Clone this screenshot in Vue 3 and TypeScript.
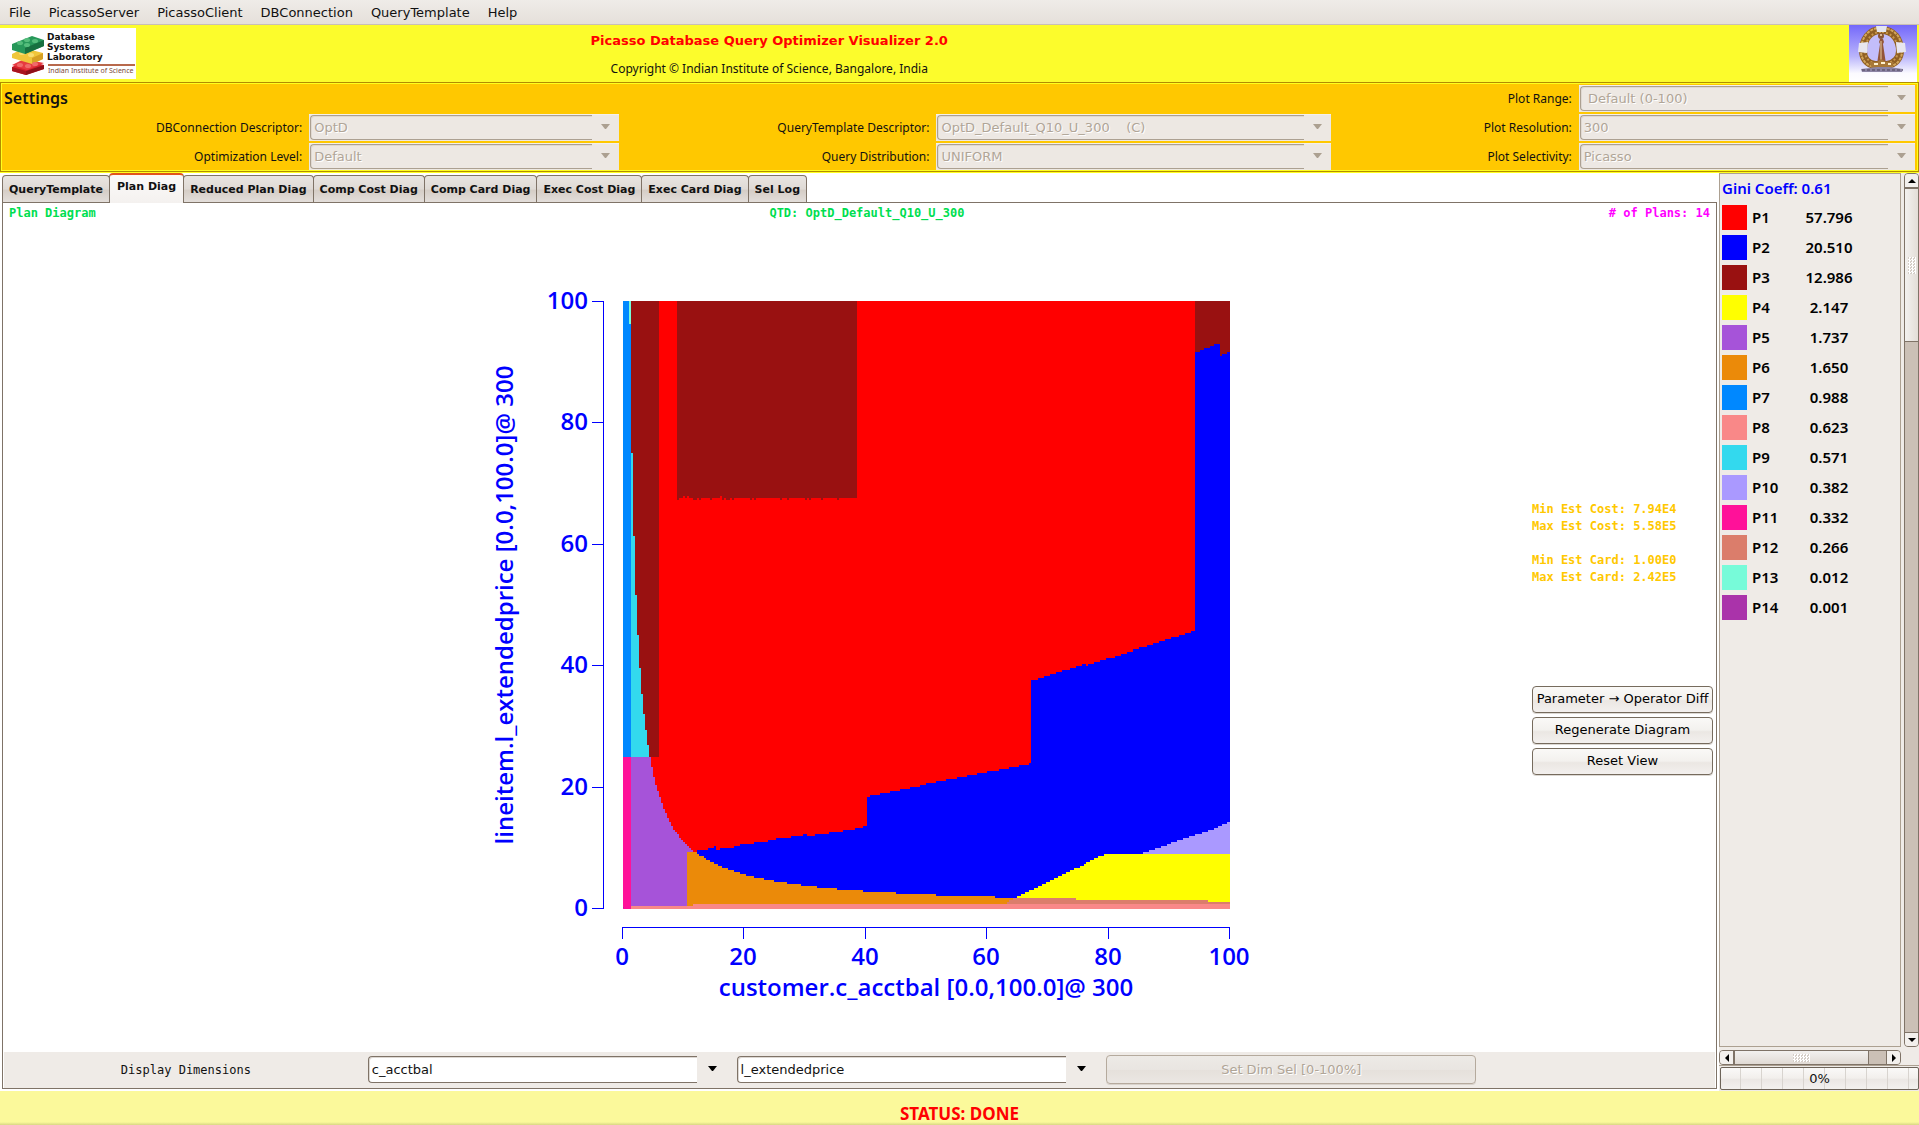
<script setup lang="ts">
import { ref } from 'vue'

interface Plan {
  name: string
  share: string
  color: string
}

interface Step {
  x: number
  y: number
}

const menus = ['File', 'PicassoServer', 'PicassoClient', 'DBConnection', 'QueryTemplate', 'Help']

const tabs = [
  'QueryTemplate',
  'Plan Diag',
  'Reduced Plan Diag',
  'Comp Cost Diag',
  'Comp Card Diag',
  'Exec Cost Diag',
  'Exec Card Diag',
  'Sel Log',
]
const activeTab = ref('Plan Diag')

const settings = [
  { id: 'range', label: 'Plot Range:', value: '\u00a0Default (0-100)', area: 'range' },
  { id: 'conn', label: 'DBConnection Descriptor:', value: 'OptD', area: 'conn' },
  { id: 'qtd', label: 'QueryTemplate Descriptor:', value: 'OptD_Default_Q10_U_300\u00a0\u00a0\u00a0\u00a0(C)', area: 'qtd' },
  { id: 'res', label: 'Plot Resolution:', value: '300', area: 'res' },
  { id: 'opt', label: 'Optimization Level:', value: 'Default', area: 'opt' },
  { id: 'dist', label: 'Query Distribution:', value: 'UNIFORM', area: 'dist' },
  { id: 'sel', label: 'Plot Selectivity:', value: 'Picasso', area: 'sel' },
]

const plans: Plan[] = [
  { name: 'P1', share: '57.796', color: '#ff0000' },
  { name: 'P2', share: '20.510', color: '#0000ff' },
  { name: 'P3', share: '12.986', color: '#991111' },
  { name: 'P4', share: '2.147', color: '#ffff00' },
  { name: 'P5', share: '1.737', color: '#a653d9' },
  { name: 'P6', share: '1.650', color: '#eb8a09' },
  { name: 'P7', share: '0.988', color: '#0088ff' },
  { name: 'P8', share: '0.623', color: '#f98888' },
  { name: 'P9', share: '0.571', color: '#33d9ee' },
  { name: 'P10', share: '0.382', color: '#aa99ff' },
  { name: 'P11', share: '0.332', color: '#ff1199' },
  { name: 'P12', share: '0.266', color: '#db7d6b' },
  { name: 'P13', share: '0.012', color: '#77fbd9' },
  { name: 'P14', share: '0.001', color: '#aa33aa' },
]

// Each region is listed as "x:top" steps from left to right.
function parse(steps: string): Step[] {
  return steps.split(' ').map((pair) => {
    const [x, y] = pair.split(':').map(Number)
    return { x, y }
  })
}

function region(steps: string, right: number, bottom: number): string {
  const list = parse(steps)
  let d = `M${list[0].x} ${bottom}`
  list.forEach((s, i) => {
    const end = i + 1 < list.length ? list[i + 1].x : right
    d += `V${s.y}H${end}`
  })
  return d + `V${bottom}Z`
}

const cyanArea = region('8:152 10:235 12:294 14:334 16:367 18:393 20:413 22:429 24:444', 26, 456)
const purpleArea = region(
  '8:456 28:466 30:476 32:484 34:490 36:496 38:502 40:508 42:512 44:517 46:521 48:525 50:529 52:531 54:533 56:537 58:539 60:541 62:543 64:545 66:547 68:549 70:551',
  72,
  605,
)
const orangeArea = region(
  '64:551 74:553 76:555 81:557 83:559 87:561 91:563 95:565 99:567 105:569 111:571 117:573 123:575 131:577 141:579 151:581 164:583 178:585 194:587 214:589 240:591 273:593 313:595 372:597',
  394,
  605,
)
const blueArea = region(
  '74:549 85:547 91:545 93:549 97:547 111:545 117:543 131:541 145:539 153:537 168:535 180:533 184:535 192:533 206:531 220:529 232:527 240:525 244:496 247:494 257:492 267:490 277:488 287:486 297:484 303:482 313:480 323:478 334:476 344:474 354:472 364:470 376:468 386:466 396:464 406:462 408:379 415:377 421:375 427:373 433:371 439:369 447:367 453:365 459:363 463:365 465:363 471:361 477:359 483:357 492:355 498:353 504:351 510:348 516:346 524:344 530:342 536:340 542:338 548:336 556:334 562:332 568:330 572:51 577:49 581:47 587:45 591:43 597:55 599:53 604:51',
  607,
  603,
)
const yellowArea = region(
  '394:595 398:593 402:591 406:589 411:587 415:585 419:583 423:581 427:579 431:577 435:575 439:573 443:571 447:569 451:567 457:565 461:563 463:561 467:559 471:557 475:555 481:553',
  607,
  603,
)
const lilacArea = region(
  '520:551 526:549 532:547 538:545 544:543 548:541 554:539 560:537 566:535 572:533 579:531 585:529 591:527 595:525 599:523 604:521',
  607,
  553,
)
const coralArea = region('384:601 386:599 390:597 453:599 585:601', 607, 603)
const salmonArea = region('8:605 70:603', 607, 608)

const teeth = [[54, 2], [70, 4], [76, 2], [87, 2], [99, 2], [103, 4], [109, 2], [127, 2], [131, 2], [157, 2], [164, 2], [182, 2], [186, 2], [198, 2], [214, 2]]
const notches = [60, 64, 97]

const yTicks = [
  { v: 100, at: 0 },
  { v: 80, at: 121 },
  { v: 60, at: 243 },
  { v: 40, at: 364 },
  { v: 20, at: 486 },
  { v: 0, at: 607 },
]
const xTicks = [
  { v: 0, at: -1 },
  { v: 20, at: 120 },
  { v: 40, at: 242 },
  { v: 60, at: 363 },
  { v: 80, at: 485 },
  { v: 100, at: 606 },
]
</script>

<template>
  <div class="app">
    <nav class="menubar">
      <button v-for="m in menus" :key="m" type="button">{{ m }}</button>
    </nav>

    <header class="banner">
      <svg class="lab-logo" viewBox="0 0 136 51" role="img" aria-label="Database Systems Laboratory">
        <rect width="136" height="51" fill="#fff" />
        <path d="M12 39 26 32 44 37V41L26 47 12 43Z" fill="#d8202c" />
        <path d="M12 39 26 43V47L12 43Z" fill="#a8141e" />
        <path d="M26 43 44 37V41L26 47Z" fill="#8e1018" />
        <path d="M12 37 24 31 44 35 27 42Z" fill="#e63a40" />
        <path d="M12 26 24 20 43 25V31L32 36 12 30Z" fill="#f0c63a" />
        <path d="M32 30 43 25V31L32 36Z" fill="#d6a024" />
        <ellipse cx="22" cy="25" rx="3" ry="2" fill="#f8dc70" />
        <ellipse cx="31" cy="27" rx="3" ry="2" fill="#f8dc70" />
        <path d="M12 16 32 8 44 12V18L25 26 12 22Z" fill="#27985a" />
        <path d="M25 20 44 12V18L25 26Z" fill="#177040" />
        <ellipse cx="20" cy="15" rx="3" ry="2" fill="#55bd7c" />
        <ellipse cx="27" cy="12" rx="3" ry="2" fill="#55bd7c" />
        <ellipse cx="27" cy="17" rx="3" ry="2" fill="#55bd7c" />
        <ellipse cx="35" cy="13" rx="3" ry="2" fill="#55bd7c" />
        <ellipse cx="20" cy="37" rx="3" ry="2" fill="#f06a6a" />
        <ellipse cx="28" cy="38" rx="3" ry="2" fill="#f06a6a" />
        <ellipse cx="35" cy="36" rx="3" ry="2" fill="#f06a6a" />
        <g class="lab-name">
          <text x="47" y="12">Database</text>
          <text x="47" y="22">Systems</text>
          <text x="47" y="32">Laboratory</text>
        </g>
        <rect x="48" y="36" width="87" height="2" fill="#b8694c" />
        <text class="lab-sub" x="48" y="45">Indian Institute of Science</text>
      </svg>
      <div class="titles">
        <h1>Picasso Database Query Optimizer Visualizer 2.0</h1>
        <p>Copyright © Indian Institute of Science, Bangalore, India</p>
      </div>
      <svg class="emblem" viewBox="0 0 68 57" role="img" aria-label="Institute emblem">
        <defs>
          <linearGradient id="sky" x1="0" y1="0" x2="0" y2="1">
            <stop offset="0" stop-color="#7468fa" />
            <stop offset="0.55" stop-color="#b9b4fb" />
            <stop offset="0.85" stop-color="#fbfaff" />
            <stop offset="1" stop-color="#ffffff" />
          </linearGradient>
        </defs>
        <rect width="68" height="57" fill="url(#sky)" />
        <path d="M32 5C20 5 14 15 14 26C14 33 18 39 26 40H38C46 39 51 33 51 26C51 15 45 5 32 5Z" fill="#c3bdfb" stroke="#8f5f24" stroke-width="8" />
        <path d="M32 3C18 3 12 14 12 26C12 34 17 41 26 42H38C48 41 53 34 53 26C53 14 47 3 32 3Z" fill="none" stroke="#d2a65a" stroke-width="2" stroke-dasharray="3 1" />
        <path d="M32 7C22 7 16 16 16 26C16 32 19 37 26 38H38C45 37 49 32 49 26C49 16 43 7 32 7Z" fill="none" stroke="#c8964a" stroke-width="2" stroke-dasharray="2 2" />
        <path d="M27 1h11l-1 6h-9Z" fill="#e4e6f0" />
        <path d="M10 18 19 17 18 28 9 27Z" fill="#e8e6ee" />
        <path d="M47 17 56 18 57 27 48 28Z" fill="#e8e6ee" />
        <path d="M31 14h3l1 3-1 2 3 20H28l3-20-1-2Z" fill="#93563a" />
        <path d="M32 16v20" stroke="#e8cf9e" stroke-width="1" />
        <circle cx="32" cy="11" r="3" fill="#8a5636" />
        <circle cx="32" cy="10" r="1" fill="#f0dcb0" />
        <path d="M20 37h8l4-3 5 3h8l-3 6H23Z" fill="#a87838" />
        <path d="M25 39h4m3-1h4m3 1h3" stroke="#fff1cd" stroke-width="2" />
        <path d="M12 44 28 42H40L54 44 53 47H13Z" fill="#8c84a4" />
        <path d="M13 45h41" stroke="#4c4258" stroke-width="1" stroke-dasharray="3 2" />
      </svg>
    </header>

    <section class="settings">
      <h2>Settings</h2>
      <template v-for="s in settings" :key="s.id">
        <label :for="s.id" :style="{ gridArea: s.area + '-l' }">{{ s.label }}</label>
        <div class="combo combo-off" :style="{ gridArea: s.area }">
          <select :id="s.id" disabled>
            <option>{{ s.value }}</option>
          </select>
          <svg class="arrow" viewBox="0 0 9 5" aria-hidden="true"><path d="M0 0H9L5 5H4Z" /></svg>
        </div>
      </template>
    </section>

    <main class="work">
      <div class="pane">
        <div class="tabs" role="tablist">
          <button
            v-for="t in tabs"
            :key="t"
            type="button"
            role="tab"
            :aria-selected="t === activeTab"
            :class="{ active: t === activeTab }"
            @click="activeTab = t"
          >{{ t }}</button>
        </div>
        <div class="tab-body">
          <div class="info">
            <span>Plan Diagram</span>
            <span>QTD: OptD_Default_Q10_U_300</span>
            <span class="count"># of Plans: 14</span>
          </div>

          <div class="canvas">
            <svg class="chart" viewBox="-161 -30 794 734" role="img" aria-label="Plan diagram">
              <g shape-rendering="crispEdges">
                <rect width="607" height="608" fill="#ff0000" />
                <rect x="8" width="28" height="456" fill="#991111" />
                <rect x="54" width="180" height="197" fill="#991111" />
                <rect v-for="t in teeth" :key="t[0]" :x="t[0]" y="197" :width="t[1]" height="2" fill="#991111" />
                <rect v-for="n in notches" :key="n" :x="n" y="195" width="2" height="2" fill="#ff0000" />
                <rect x="572" width="35" height="60" fill="#991111" />
                <rect width="8" height="456" fill="#0088ff" />
                <rect x="6" width="2" height="23" fill="#77fbd9" />
                <path :d="cyanArea" fill="#33d9ee" />
                <rect y="456" width="8" height="152" fill="#ff1199" />
                <rect y="606" width="1" height="1" fill="#aa33aa" />
                <path :d="purpleArea" fill="#a653d9" />
                <path :d="blueArea" fill="#0000ff" />
                <path :d="orangeArea" fill="#eb8a09" />
                <path :d="yellowArea" fill="#ffff00" />
                <path :d="lilacArea" fill="#aa99ff" />
                <path :d="coralArea" fill="#db7d6b" />
                <path :d="salmonArea" fill="#f98888" />
                <rect x="-20" width="1" height="608" fill="#0000ff" />
                <rect v-for="t in yTicks" :key="t.v" x="-31" :y="t.at" width="11" height="1" fill="#0000ff" />
                <rect x="-1" y="626" width="608" height="1" fill="#0000ff" />
                <rect v-for="t in xTicks" :key="t.v" :x="t.at" y="626" width="1" height="12" fill="#0000ff" />
              </g>
              <g class="axis-text">
                <text v-for="t in yTicks" :key="t.v" x="-35" :y="t.at + 8" text-anchor="end">{{ t.v }}</text>
                <text v-for="t in xTicks" :key="t.v" :x="t.at" y="664" text-anchor="middle">{{ t.v }}</text>
                <text x="303" y="695" text-anchor="middle">customer.c_acctbal [0.0,100.0]@ 300</text>
                <text transform="translate(-110 304) rotate(-90)" text-anchor="middle">lineitem.l_extendedprice [0.0,100.0]@ 300</text>
              </g>
            </svg>

            <div class="side">
              <div class="stats">
                <p>Min Est Cost: 7.94E4<br />Max Est Cost: 5.58E5</p>
                <p>Min Est Card: 1.00E0<br />Max Est Card: 2.42E5</p>
              </div>
              <div class="actions">
                <button type="button">Parameter → Operator Diff</button>
                <button type="button">Regenerate Diagram</button>
                <button type="button">Reset View</button>
              </div>
            </div>
          </div>

          <div class="dims">
            <span class="dims-label">Display Dimensions</span>
            <div class="combo">
              <select aria-label="First dimension">
                <option>c_acctbal</option>
              </select>
              <svg class="arrow" viewBox="0 0 9 5" aria-hidden="true"><path d="M0 0H9L5 5H4Z" /></svg>
            </div>
            <div class="combo">
              <select aria-label="Second dimension">
                <option>l_extendedprice</option>
              </select>
              <svg class="arrow" viewBox="0 0 9 5" aria-hidden="true"><path d="M0 0H9L5 5H4Z" /></svg>
            </div>
            <button type="button" disabled>Set Dim Sel [0-100%]</button>
          </div>
        </div>
      </div>

      <aside class="legend">
        <div class="scroll-area">
          <div class="legend-view">
            <h3>Gini Coeff: 0.61</h3>
            <table>
              <tbody>
                <tr v-for="p in plans" :key="p.name">
                  <td class="chip"><i :style="{ background: p.color }"></i></td>
                  <td class="name">{{ p.name }}</td>
                  <td class="share">{{ p.share }}</td>
                </tr>
              </tbody>
            </table>
          </div>
          <div class="vbar">
            <button type="button" aria-label="Scroll up"><svg viewBox="0 0 8 4"><path d="M0 4 4 0 8 4Z" /></svg></button>
            <div class="thumb"><span class="grip"></span></div>
            <div class="trough"></div>
            <button type="button" aria-label="Scroll down"><svg viewBox="0 0 8 4"><path d="M0 0H8L4 4Z" /></svg></button>
          </div>
          <div class="hbar">
            <button type="button" aria-label="Scroll left"><svg viewBox="0 0 4 8"><path d="M4 0V8L0 4Z" /></svg></button>
            <div class="thumb"><span class="grip"></span></div>
            <div class="trough"></div>
            <button type="button" aria-label="Scroll right"><svg viewBox="0 0 4 8"><path d="M0 0V8L4 4Z" /></svg></button>
          </div>
        </div>
        <div class="progress" role="progressbar" aria-valuenow="0" aria-valuemin="0" aria-valuemax="100">0%</div>
      </aside>
    </main>

    <footer class="status">STATUS: DONE</footer>
  </div>
</template>

<style>
body {
  margin: 0;
}
</style>

<style scoped>
.app {
  --ui: 'DejaVu Sans', sans-serif;
  --form: 'Noto Sans', sans-serif;
  --mono: 'DejaVu Sans Mono', monospace;
  --face: #efebe7;
  --edge: #7f7367;
  --edge-soft: #aca091;
  display: flex;
  flex-direction: column;
  min-height: 100vh;
  background: #fff;
  color: #111;
  font: 13px/16px var(--ui);
}
.app *,
.app *::before {
  box-sizing: border-box;
}
h1,
h2,
h3,
p {
  margin: 0;
}
button,
select {
  margin: 0;
  font: inherit;
  color: inherit;
}

.menubar {
  display: flex;
  gap: 18px;
  height: 25px;
  padding: 1px 0 0 9px;
  border-bottom: 1px solid #c9bfb5;
  background: linear-gradient(#efece8, #e5e0da);
}
.menubar button {
  padding: 0;
  border: 0;
  background: none;
}

.banner {
  display: grid;
  grid-template-columns: 136px 1268fr 447fr 68px;
  align-items: center;
  height: 57px;
  padding-right: 2px;
  background: #fcfc2c;
}
.lab-logo {
  width: 136px;
  height: 51px;
}
.lab-name {
  font: 700 9px var(--ui);
  fill: #111;
}
.lab-sub {
  font: 7px var(--form);
  fill: #7a4a3a;
}
.titles {
  display: flex;
  flex-direction: column;
  gap: 12px;
  padding-top: 3px;
  text-align: center;
}
.titles h1 {
  color: #f00;
  font: 700 13px/16px var(--ui);
}
.titles p {
  font: 12px/16px var(--form);
}
.emblem {
  grid-column: 4;
  width: 68px;
  height: 57px;
}

.settings {
  display: grid;
  grid-template-columns: 307fr 310fr 317fr 394fr 248fr 336fr;
  grid-template-rows: repeat(3, 27px);
  grid-template-areas:
    'title title title title range-l range'
    'conn-l conn qtd-l qtd res-l res'
    'opt-l opt dist-l dist sel-l sel';
  row-gap: 2px;
  margin-bottom: 1px;
  padding: 2px 3px 1px 1px;
  border: 1px solid #b28c00;
  outline: 1px solid #ffff1e;
  outline-offset: -2px;
  background: #ffc800;
  box-shadow: 0 1px #ffff1e;
}
.settings h2 {
  grid-area: title;
  align-self: center;
  padding: 0 2px 2px;
  font: 600 16px/22px var(--form);
}
.settings label {
  align-self: center;
  padding-right: 7px;
  text-align: right;
  font: 12px/16px var(--form);
}

.combo {
  display: flex;
  align-items: center;
  min-width: 0;
  height: 27px;
  background: var(--face);
}
.combo select {
  flex: 1;
  min-width: 0;
  height: 27px;
  padding: 0 3px;
  appearance: none;
  border: 1px solid var(--edge);
  border-right: 0;
  border-radius: 4px 0 0 4px;
  box-shadow: inset 1px 1px #ddd8d3;
  background: #fff;
  outline: none;
}
.arrow {
  flex: none;
  width: 9px;
  height: 5px;
  margin: 0 9px 2px 11px;
  fill: #000;
}
.combo-off {
  padding-left: 1px;
  background: #ede8e3;
  box-shadow: inset 0 1px #f4f0ec;
}
.combo-off select {
  height: 25px;
  border-color: #aca091;
  box-shadow: inset 1px 1px #e0d9d2;
  background: #ede8e3;
  color: #b0a597;
  text-shadow: 1px 1px #fff;
  opacity: 1;
}
.combo-off .arrow {
  margin-left: 9px;
  fill: #aca091;
}

.work {
  display: flex;
  flex: 1;
  min-height: 0;
}
.pane {
  display: flex;
  flex: 1;
  flex-direction: column;
  min-width: 0;
  padding: 0 1px 2px 2px;
}
.tabs {
  display: flex;
  align-items: flex-end;
  height: 29px;
}
.tabs button {
  height: 27px;
  margin-right: -1px;
  padding: 1px 6px 0;
  border: 1px solid var(--edge);
  border-bottom: 0;
  border-radius: 4px 4px 0 0;
  background: linear-gradient(#e9e5e1, #dfdad5 50%, #d5cdc6 55%, #e3deda);
  font: 700 11px/16px var(--ui);
  white-space: nowrap;
}
.tabs button.active {
  position: relative;
  height: 30px;
  margin-bottom: -1px;
  padding: 0 7px 4px;
  border-top: 2px solid #e2541a;
  background: linear-gradient(#fbfaf9, #f4f1ef);
}
.tab-body {
  display: flex;
  flex: 1;
  flex-direction: column;
  padding: 0 1px;
  border: 1px solid var(--edge);
}
.info {
  display: grid;
  grid-template-columns: 51fr auto 50fr;
  padding: 2px 5px;
  color: #00de50;
  font: 700 12px/16px var(--mono);
}
.info .count {
  color: #f0f;
  text-align: right;
}
.canvas {
  display: grid;
  flex: 1;
  grid-template-columns: 1fr 794px 1fr;
  align-items: center;
  padding-right: 2px;
}
.chart {
  grid-column: 2;
  width: 794px;
  height: 734px;
}
.axis-text {
  font: 600 24px 'Open Sans', sans-serif;
  fill: #00f;
}
.side {
  display: flex;
  flex-direction: column;
  gap: 100px;
  justify-self: end;
  width: 181px;
}
.stats {
  display: flex;
  flex-direction: column;
  gap: 17px;
  color: #ffc800;
  font: 700 12px/17px var(--mono);
}
.actions {
  display: flex;
  flex-direction: column;
  gap: 4px;
}
.actions button {
  height: 27px;
  padding: 0;
  border: 1px solid #766b5d;
  border-radius: 4px;
  background: linear-gradient(#faf9f7, #f3f1ee 48%, #ebe7e3 55%, #f3f0ee);
  box-shadow: 0 1px #dcd8d3;
  color: #000;
  white-space: nowrap;
}
.dims {
  display: grid;
  grid-template-columns: 364fr 369fr 370fr 370fr 239fr;
  align-items: center;
  height: 36px;
  padding-bottom: 1px;
  background: var(--face);
}
.dims-label {
  text-align: center;
  font: 12px/16px var(--mono);
}
.dims .combo {
  padding-right: 11px;
}
.dims button {
  height: 29px;
  border: 1px solid #b5aa9d;
  border-radius: 4px;
  background: linear-gradient(#edeae6, #e9e5e1 50%, #e5e0db 52%, #ebe7e3);
  box-shadow: 0 1px #d8d2cc;
  color: #b0a597;
  text-shadow: 1px 1px #fff;
}

.legend {
  display: flex;
  flex-direction: column;
  gap: 1px;
  width: 200px;
  margin-left: 1px;
  padding-bottom: 1px;
  background: var(--face);
}
.scroll-area {
  display: grid;
  flex: 1;
  grid-template-columns: 1fr 15px;
  grid-template-rows: 1fr 15px;
  gap: 3px;
  border-bottom: 1px solid var(--edge-soft);
}
.legend-view {
  padding: 5px 2px;
  border: 1px solid var(--edge-soft);
  font: 600 15px/18px var(--form);
  color: #000;
}
.legend-view h3 {
  padding-bottom: 5px;
  color: #00f;
  font: inherit;
}
.legend-view table {
  border-collapse: collapse;
}
.legend-view td {
  height: 30px;
  padding: 0;
}
.chip {
  width: 30px;
}
.chip i {
  display: block;
  width: 25px;
  height: 25px;
}
.name {
  width: 40px;
}
.share {
  width: 74px;
  text-align: center;
}
.vbar,
.hbar {
  display: flex;
  border: 1px solid var(--edge);
  border-radius: 4px;
  background: #cbc0b6;
  overflow: hidden;
}
.vbar {
  flex-direction: column;
}
.vbar button,
.hbar button {
  display: grid;
  flex: none;
  place-content: center;
  width: 13px;
  height: 13px;
  padding: 0;
  border: 0;
  background: #f3f0ed;
}
.vbar svg {
  width: 8px;
  height: 4px;
}
.hbar svg {
  width: 4px;
  height: 8px;
}
.thumb {
  display: grid;
  place-content: center;
}
.vbar .thumb {
  flex: 153;
  border: solid var(--edge);
  border-width: 2px 0 1px;
  background: linear-gradient(90deg, #f3f1ef, #e3ddd7);
}
.hbar .thumb {
  flex: 136;
  border: solid var(--edge);
  border-width: 0 1px 0 2px;
  background: linear-gradient(#f3f1ef, #e0dad4);
}
.grip {
  width: 8px;
  height: 17px;
  background: repeating-conic-gradient(#fff 0 25%, #d5cec7 0 50%) 0 0 / 3px 3px;
}
.hbar .grip {
  width: 17px;
  height: 8px;
}
.vbar .trough {
  flex: 693;
  border-bottom: 1px solid var(--edge);
}
.hbar .trough {
  flex: 17;
  border-right: 1px solid var(--edge);
}
.progress {
  height: 23px;
  margin-left: 1px;
  border: 1px solid #6d6459;
  border-radius: 2px;
  background:
    repeating-linear-gradient(90deg, transparent 0 19px, #d8d4cf 19px 20px, transparent 20px 21px),
    linear-gradient(#faf9f8, #f2efec 48%, #ebe7e4 54%, #f3f1ef);
  text-align: center;
  font: 13px/21px var(--ui);
}

.status {
  height: 34px;
  padding-top: 12px;
  background: linear-gradient(#fbf99b 31px, #d8d684 34px);
  color: #f00;
  text-align: center;
  font: 700 17px/22px var(--form);
}
</style>
